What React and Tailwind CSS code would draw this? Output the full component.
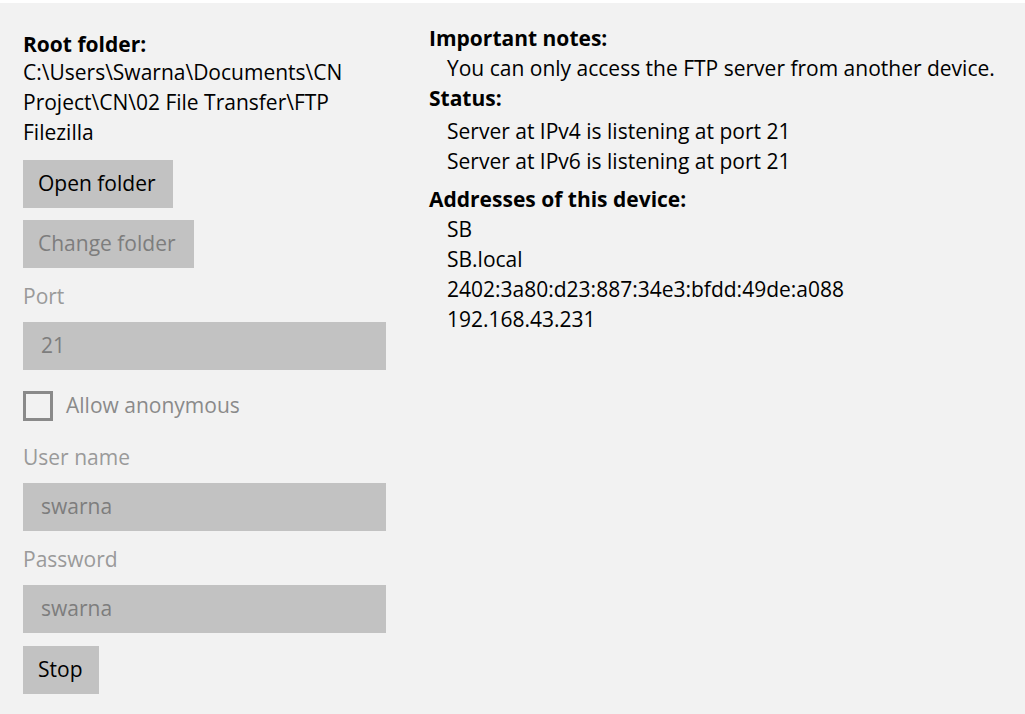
import React from "react";

const font = { fontFamily: '"Open Sans", "Noto Sans", sans-serif' };

function Btn({ children, disabled, className = "" }) {
  return (
    <div
      className={`h-[48px] bg-[#c2c2c2] flex items-center px-[15px] text-[21px] ${
        disabled ? "text-[#7d7d7d]" : "text-black"
      } ${className}`}
    >
      {children}
    </div>
  );
}

function Field({ value }) {
  return (
    <div className="h-[48px] w-[363px] bg-[#c2c2c2] flex items-center px-[18px] text-[21px] text-[#7d7d7d]">
      {value}
    </div>
  );
}

export default function App() {
  return (
    <div
      className="w-[1025px] h-[714px] bg-[#f2f2f2] border-t-[3px] border-white overflow-hidden flex text-black"
      style={font}
    >
      <div className="w-[406px] pl-[23px] pt-[29px] flex flex-col">
        <div className="text-[21px] font-bold leading-[25px]">Root folder:</div>
        <div className="text-[21px] leading-[30px] w-[350px]">
          C:\Users\Swarna\Documents\CN Project\CN\02 File Transfer\FTP Filezilla
        </div>
        <div className="mt-[13px] flex flex-col items-start">
          <Btn className="w-[150px]">Open folder</Btn>
          <Btn disabled className="mt-[12px] w-[171px]">Change folder</Btn>
        </div>
        <div className="mt-[14px] text-[21px] leading-[28px] text-[#9a9a9a]">Port</div>
        <div className="mt-[12px]">
          <Field value="21" />
        </div>
        <div className="mt-[21px] flex items-center h-[30px]">
          <div className="w-[30px] h-[30px] border-[3px] border-[#8a8a8a]" />
          <span className="ml-[13px] text-[21px] text-[#8a8a8a]">Allow anonymous</span>
        </div>
        <div className="mt-[22px] text-[21px] leading-[28px] text-[#9a9a9a]">User name</div>
        <div className="mt-[12px]">
          <Field value="swarna" />
        </div>
        <div className="mt-[14px] text-[21px] leading-[28px] text-[#9a9a9a]">Password</div>
        <div className="mt-[12px]">
          <Field value="swarna" />
        </div>
        <div className="mt-[13px] flex">
          <Btn className="w-[76px]">Stop</Btn>
        </div>
      </div>
      <div className="pl-[23px] pt-[21px] flex flex-col">
        <div className="text-[21px] font-bold leading-[29px]">Important notes:</div>
        <div className="pl-[18px] text-[21px] leading-[30px]">
          You can only access the FTP server from another device.
        </div>
        <div className="mt-[1px] text-[21px] font-bold leading-[28px]">Status:</div>
        <div className="pl-[18px] text-[21px] leading-[30px] mt-[4px]">
          <div>Server at IPv4 is listening at port 21</div>
          <div>Server at IPv6 is listening at port 21</div>
        </div>
        <div className="mt-[9px] text-[21px] font-bold leading-[28px]">Addresses of this device:</div>
        <div className="pl-[18px] text-[21px] leading-[30px] mt-[1px]">
          <div>SB</div>
          <div>SB.local</div>
          <div>2402:3a80:d23:887:34e3:bfdd:49de:a088</div>
          <div>192.168.43.231</div>
        </div>
      </div>
    </div>
  );
}
